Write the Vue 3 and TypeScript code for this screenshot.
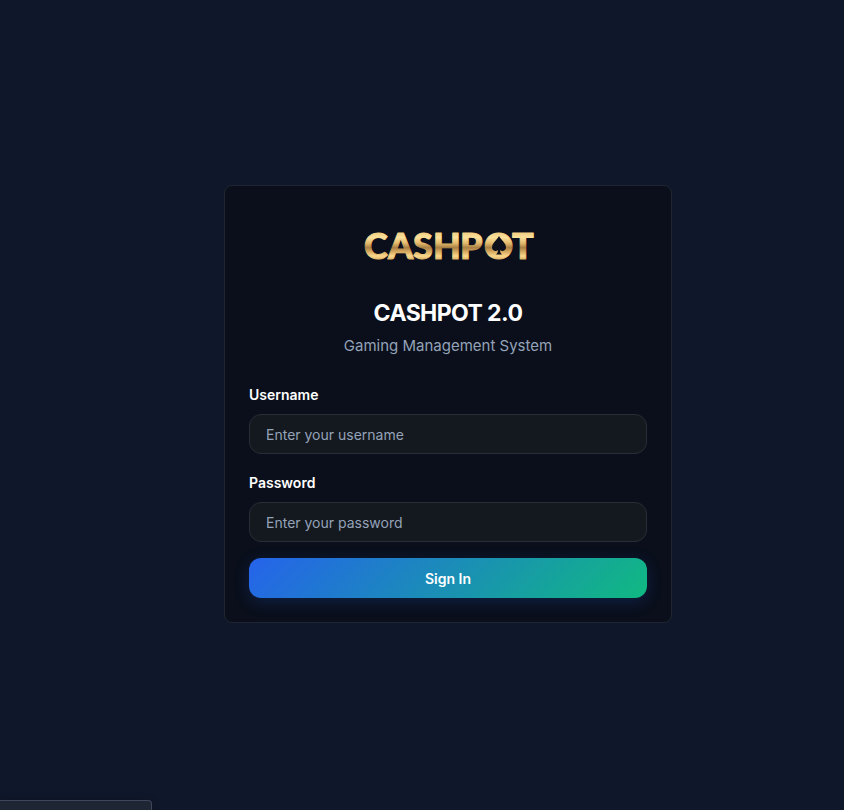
<script setup lang="ts">
import { ref } from 'vue'

const username = ref('')
const password = ref('')
</script>

<template>
  <main class="page">
    <section class="card">
      <header class="head">
        <svg class="logo" viewBox="0 0 180 48" role="img" aria-label="CASHPOT">
          <defs>
            <linearGradient id="gold" gradientUnits="userSpaceOnUse" x1="0" y1="10" x2="0" y2="38">
              <stop offset="0" stop-color="#f0cc80" />
              <stop offset="0.2" stop-color="#fbe09a" />
              <stop offset="0.4" stop-color="#e3b96c" />
              <stop offset="0.56" stop-color="#a98045" />
              <stop offset="0.7" stop-color="#d6a960" />
              <stop offset="0.86" stop-color="#fbd88c" />
              <stop offset="1" stop-color="#d9ab60" />
            </linearGradient>
          </defs>
          <text class="wordmark" x="6 30 55 75 102 126 154" y="37" fill="url(#gold)" stroke="url(#gold)">CASHPOT</text>
          <circle cx="141" cy="24" r="11" fill="url(#gold)" />
          <path
            class="spade"
            d="M141 14 C139 18 134 21 134 25.500 C134 28.500 138 30 140 28 C140 30 139.500 31 138 32.500 H144 C142.500 31 142 30 142 28 C144 30 148 28.500 148 25.500 C148 21 143 18 141 14 Z"
          />
        </svg>
        <h1 class="title">CASHPOT 2.0</h1>
        <p class="subtitle">Gaming Management System</p>
      </header>

      <form class="form" @submit.prevent>
        <div class="field">
          <label for="username">Username</label>
          <input id="username" v-model="username" type="text" placeholder="Enter your username" />
        </div>
        <div class="field">
          <label for="password">Password</label>
          <input id="password" v-model="password" type="password" placeholder="Enter your password" />
        </div>
        <button class="submit" type="submit">Sign In</button>
      </form>
    </section>
    <div class="status"></div>
  </main>
</template>

<style>
body {
  background: #0f172a;
}
</style>

<style scoped>
.page {
  box-sizing: border-box;
  min-height: 100vh;
  display: flex;
  align-items: center;
  justify-content: center;
  padding: 16px 0 18px 52px;
  background: #0f172a;
  font-family: Inter, 'Liberation Sans', sans-serif;
  color: #fff;
  overflow: hidden;
}

.card {
  box-sizing: border-box;
  width: 100%;
  max-width: 448px;
  padding: 24px;
  border: 1px solid #20252f;
  border-radius: 8px;
  background: #0a0f1b;
}

.head {
  display: flex;
  flex-direction: column;
  align-items: center;
  margin-bottom: 24px;
  text-align: center;
}

.logo {
  width: 180px;
  height: 48px;
  margin: 12px 0 27px;
}

.wordmark {
  font-family: Lato, sans-serif;
  font-size: 36px;
  font-weight: 900;
  stroke-width: 1px;
  stroke-linejoin: round;
}

.spade {
  fill: #0a0f1b;
}

.title {
  margin: 0;
  font-size: 23px;
  line-height: 32px;
  font-weight: 700;
  letter-spacing: -0.025em;
}

.subtitle {
  margin: 5px 0 0;
  font-size: 15px;
  line-height: 24px;
  color: #94a3b8;
}

.form {
  display: flex;
  flex-direction: column;
  gap: 16px;
}

.field {
  display: flex;
  flex-direction: column;
  gap: 6px;
}

.field label {
  font-size: 14px;
  line-height: 26px;
  font-weight: 600;
}

.field input {
  box-sizing: border-box;
  width: 100%;
  height: 40px;
  padding: 0 16px;
  border: 1px solid #292d35;
  border-radius: 12px;
  background: #14181f;
  font: inherit;
  font-size: 14px;
  color: #fff;
  outline: none;
}

.field input::placeholder {
  color: #94a3b8;
  opacity: 1;
}

.submit {
  height: 40px;
  border: 0;
  border-radius: 12px;
  background: linear-gradient(135deg, #2563eb, #10b981);
  box-shadow: 0 4px 16px rgba(37, 99, 235, 0.2);
  font: inherit;
  font-size: 14px;
  font-weight: 600;
  color: #fff;
  cursor: pointer;
}

.status {
  position: fixed;
  left: 0;
  bottom: 0;
  box-sizing: border-box;
  width: 152px;
  height: 10px;
  border: 1px solid #3d465c;
  border-width: 1px 1px 0 0;
  border-radius: 0 4px 0 0;
  background: #1e2533;
  box-shadow: 0 0 8px rgba(0, 0, 0, 0.2);
}
</style>
